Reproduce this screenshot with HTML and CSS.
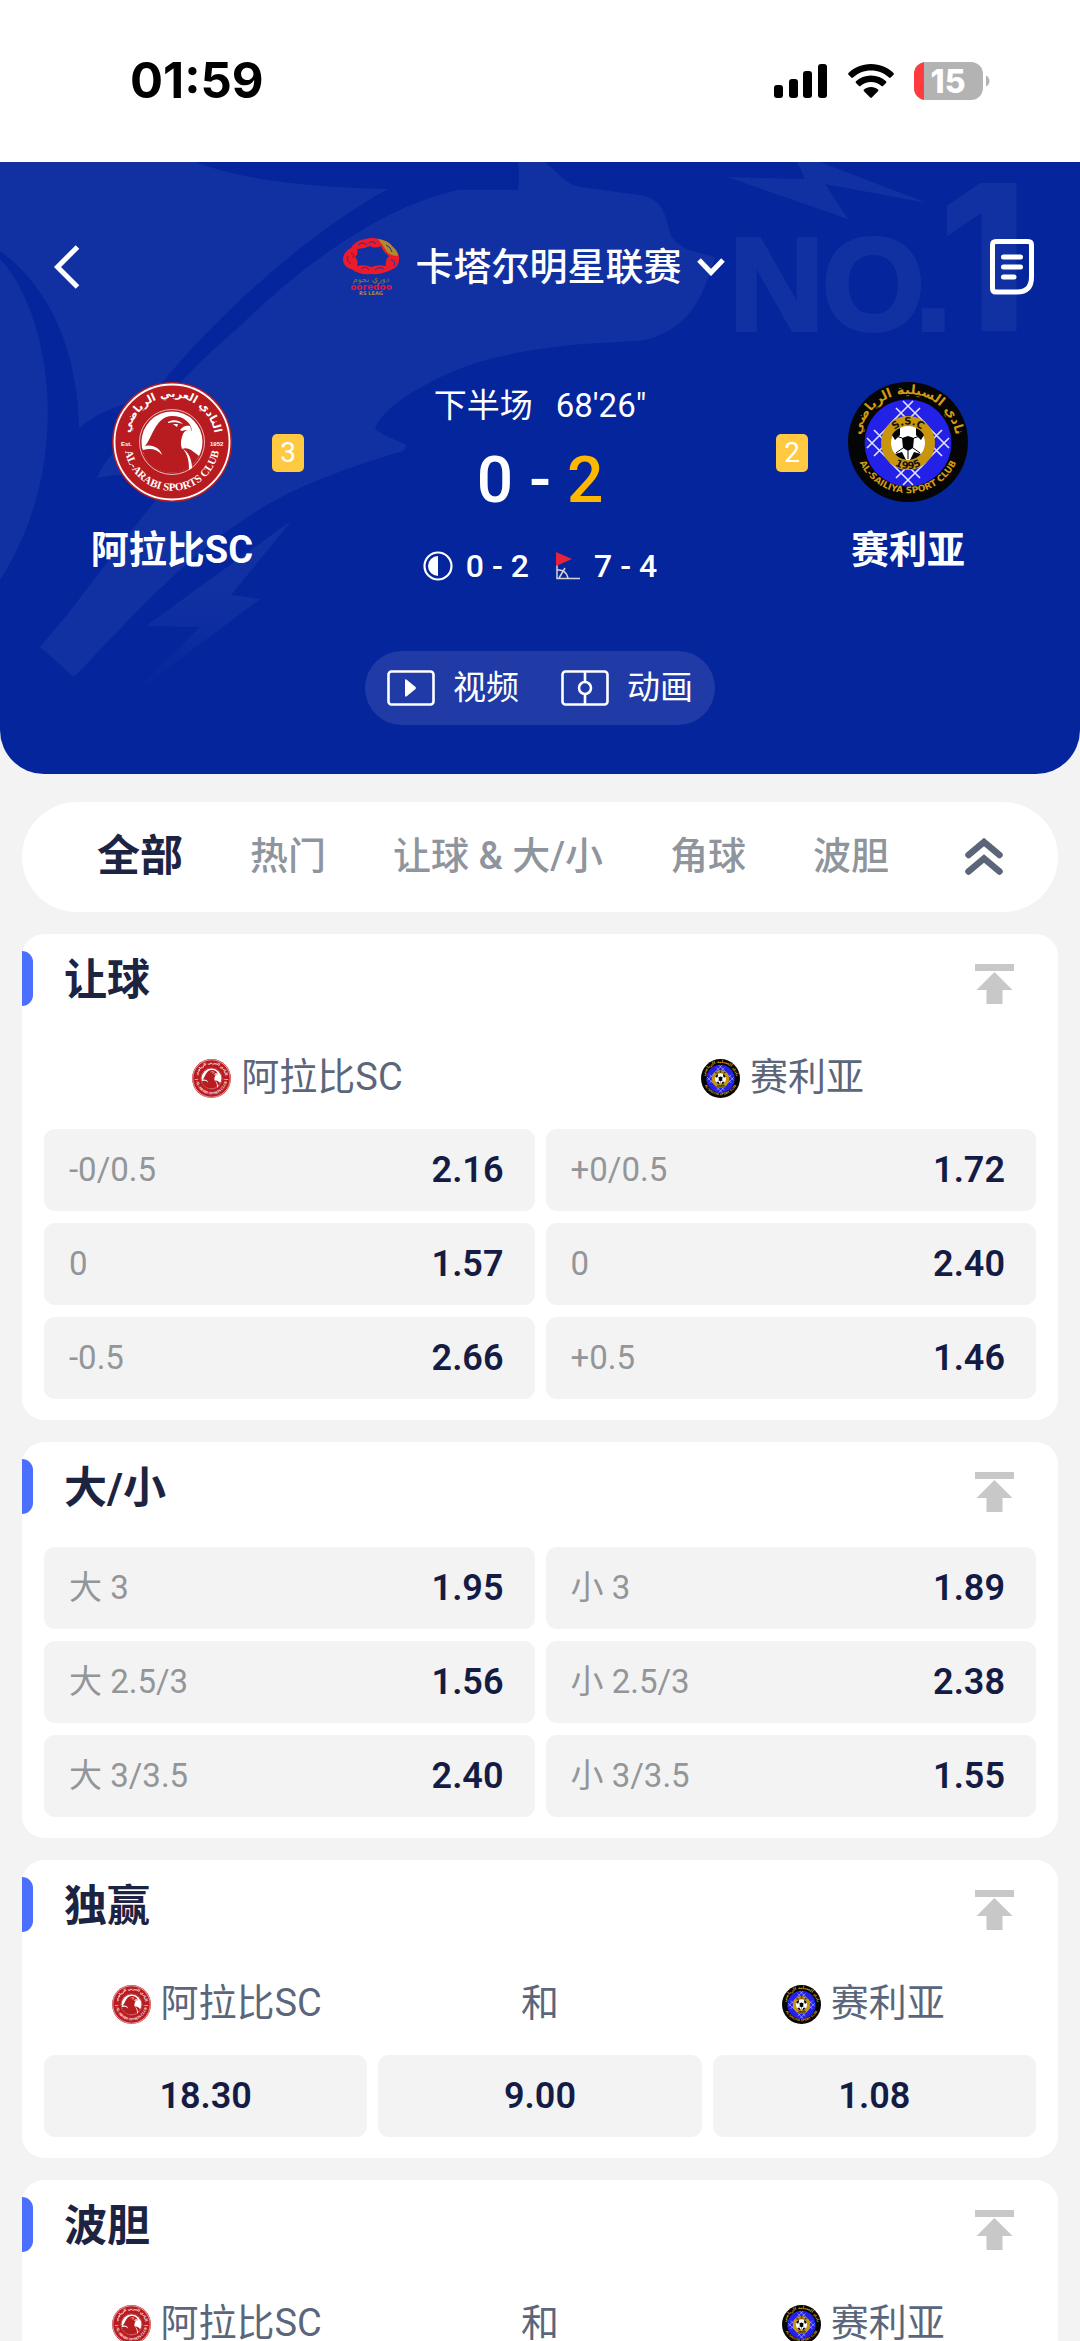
FILE: index.html
```html
<!DOCTYPE html>
<html lang="zh-CN">
<head>
<meta charset="utf-8">
<meta name="viewport" content="width=device-width, initial-scale=1">
<title>阿拉比SC - 赛利亚</title>
<link rel="stylesheet" href="styles.css">
</head>
<body>
<svg class="defs" aria-hidden="true">
  <symbol id="arabi" viewBox="0 0 120 120">
    <circle cx="60" cy="60" r="60" fill="#b91c20"/>
    <circle cx="60" cy="60" r="57.500" fill="none" stroke="#fff" stroke-width="1.800"/>
    <circle cx="60" cy="60" r="32.500" fill="none" stroke="#e9b9ba" stroke-width="1"/>
    <circle cx="60" cy="60" r="30.500" fill="#fff"/>
    <path d="M30 67C36 62 38 55 42 48C46 40 52 34 60 34C71 34 79 40 80 49C76 47 73 48 71 52C69 57 68 62 70 67C76 64 82 70 87 74A30.500 30.500 0 0 1 33 75L30 67Z" fill="#b91c20"/>
    <path d="M30 65C38 61 48 65 50 73C45 67 39 66 31 68ZM71 67C77 70 80 79 80 86L77 88C77 79 76 73 71 67ZM56 40C61 37 67 38 71 42C65 40 61 40 56 41ZM61 42L66 42L65 45ZM68 48C71 44 74 43 78 44L80 50C77 47 73 48 70 49Z" fill="#fff"/>
    <path id="arabi-low" d="M13.500 71A47.500 47.500 0 0 0 106.500 71" fill="none"/>
    <path id="arabi-top" d="M17 58A43 43 0 0 1 103 58" fill="none"/>
    <text class="crest-serif" fill="#fff"><textPath href="#arabi-low" startOffset="50%" text-anchor="middle">AL-ARABI SPORTS CLUB</textPath></text>
    <text class="crest-arabic" fill="#fff"><textPath href="#arabi-top" startOffset="50%" text-anchor="middle">النادي العربي الرياضي</textPath></text>
    <text class="crest-tiny" x="9" y="64" fill="#fff">Est.</text>
    <text class="crest-tiny" x="98" y="64" fill="#fff">1952</text>
  </symbol>
  <symbol id="sailiya" viewBox="0 0 120 120">
    <circle cx="60" cy="60" r="60" fill="#050505"/>
    <circle cx="60" cy="61" r="43.500" fill="#2320e8"/>
    <g stroke="#e4e4ff" stroke-width="1.600" fill="none">
      <path d="M55 19L78 42M65 19L42 42M48 26L62 40M72 26L58 40M55 103L78 80M65 103L42 80M48 96L62 82M72 96L58 82"/>
      <path d="M19 56L42 79M19 66L42 43M26 48L36 58M26 74L36 64M101 56L78 79M101 66L78 43M94 48L84 58M94 74L84 64"/>
    </g>
    <circle cx="60" cy="61" r="27" fill="#c8960c"/>
    <circle cx="60" cy="61" r="17" fill="#fff"/>
    <path d="M54 56L60 54L66 56L65 66L60 69L55 66ZM44 53A17 17 0 0 1 52 46L52 53L47 58ZM76 53A17 17 0 0 0 68 46L68 53L73 58ZM47 72L54 70L58 78A17 17 0 0 1 47 72ZM73 72L66 70L62 78A17 17 0 0 0 73 72Z" fill="#050505"/>
    <path d="M55 66L48 71M65 66L72 71M54 56L48 54M66 56L72 54M60 69V77" stroke="#050505" stroke-width="1"/>
    <path id="sail-in" d="M41.500 61A18.500 18.500 0 0 1 78.500 61" fill="none"/>
    <path id="sail-inlow" d="M34 61A26 26 0 0 0 86 61" fill="none"/>
    <path id="sail-low" d="M7.500 68A53.500 53.500 0 0 0 112.500 68" fill="none"/>
    <path id="sail-top" d="M12 60A48 48 0 0 1 108 60" fill="none"/>
    <text class="crest-sans" fill="#111"><textPath href="#sail-in" startOffset="50%" text-anchor="middle">S.S.C</textPath></text>
    <text class="crest-sans" fill="#111"><textPath href="#sail-inlow" startOffset="50%" text-anchor="middle">1995</textPath></text>
    <text class="crest-sans crest-sans-sm" fill="#d49b12"><textPath href="#sail-low" startOffset="50%" text-anchor="middle">AL-SAILIYA SPORT CLUB</textPath></text>
    <text class="crest-arabic crest-arabic-lg" fill="#d49b12"><textPath href="#sail-top" startOffset="50%" text-anchor="middle">نادي السيلية الرياضي</textPath></text>
  </symbol>
  <symbol id="totop" viewBox="0 0 39 40">
    <path d="M0 0H39V7H0ZM19.500 8L37.500 26H27.500V40H11.500V26H1.500Z" fill="#c8c8c8"/>
  </symbol>
</svg>

<header class="status">
  <time class="clock">01:59</time>
  <div class="status-icons">
    <svg width="54" height="36" viewBox="0 0 54 36" aria-hidden="true"><rect x="0" y="22" width="9" height="13" rx="3"/><rect x="15" y="16" width="9" height="19" rx="3"/><rect x="29" y="8" width="9" height="27" rx="3"/><rect x="44" y="1" width="9" height="34" rx="3"/></svg>
    <svg width="46" height="36" viewBox="0 0 46 36" aria-hidden="true"><path d="M23 1C32 1 40 4.500 45.500 10C46 10.500 46 11.200 45.500 11.700L42.700 14.500C42.200 15 41.500 15 41 14.500C36 10 30 7.500 23 7.500S10 10 5 14.500C4.500 15 3.800 15 3.300 14.500L.500 11.700C0 11.200 0 10.500 .500 10C6 4.500 14 1 23 1Z"/><path d="M23 12.500C29 12.500 34 14.600 38 18.300C38.500 18.800 38.500 19.500 38 20L35 23C34.500 23.400 34 23.400 33.500 23C30.500 20.500 27 19 23 19S15.500 20.500 12.500 23C12 23.400 11.500 23.400 11 23L8 20C7.500 19.500 7.500 18.800 8 18.300C12 14.600 17 12.500 23 12.500Z"/><path d="M23 24C25.800 24 28.200 25 30 26.600C30.500 27 30.500 27.700 30 28.200L23.800 34.500C23.300 35 22.700 35 22.200 34.500L16 28.200C15.500 27.700 15.500 27 16 26.600C17.800 25 20.200 24 23 24Z"/></svg>
    <svg width="76" height="38" viewBox="0 0 76 38" aria-hidden="true"><clipPath id="batt"><rect width="69" height="38" rx="12"/></clipPath><g clip-path="url(#batt)"><rect width="69" height="38" fill="#b3b3b3"/><rect width="10" height="38" fill="#ff3b3f"/></g><path d="M72 13.500Q75.500 15.500 75.500 19T72 24.500Z" fill="#b3b3b3"/><text class="batt-text" x="34" y="31" text-anchor="middle" fill="#fff">15</text></svg>
  </div>
</header>

<section class="hero">
  <svg class="hero-art" viewBox="0 0 1080 612" preserveAspectRatio="xMidYMin slice" aria-hidden="true">
    <defs><linearGradient id="fade" x1="0" y1="0" x2="0" y2="1"><stop offset=".4" stop-color="#1131a2"/><stop offset="1" stop-color="#04259c"/></linearGradient></defs>
    <g fill="#1131a2">
      <path d="M0 0H196C240 18 310 25 388 27C300 75 200 170 152 234C120 242 95 252 79 266C78 190 50 125 0 89Z"/>
      <path d="M0 97C50 150 76 300 0 418Z"/>
      <path d="M518 0H545C560 12 565 22 580 25L640 33C668 38 665 60 672 75C682 90 700 90 715 95C705 130 692 160 660 173C650 178 640 179 620 180C560 182 500 190 454 209C410 228 380 250 375 267C385 275 400 279 406 283Q408 288 396 291C360 302 330 312 289 331C210 370 150 435 74 515L40 485C80 440 120 380 162 331Q164 318 138 312Q118 312 97 316C110 285 140 270 152 245L175 226C195 205 215 185 238 166C300 105 380 45 458 28H518Q520 14 518 0Z"/>
      <path d="M727 15L805 17L797 0H820L927 41L825 22L848 57Z"/>
      <text class="art-no" y="168"><tspan x="729">N</tspan><tspan x="822">O</tspan><tspan x="915">.</tspan></text>
      <text class="art-one" x="938" y="169">1</text>
    </g>
    <path d="M291 359L231 433L260 437L131 534L200 465L146 464Z" fill="url(#fade)"/>
  </svg>

  <nav class="topbar">
    <button class="icon-btn back" aria-label="返回"><svg width="26" height="44" viewBox="0 0 26 44"><path d="M23.500 2L3.500 22L23.500 42" fill="none" stroke="#fff" stroke-width="5"/></svg></button>
    <button class="league">
      <svg width="57" height="58" viewBox="0 0 57 58" aria-hidden="true">
        <path fill-rule="evenodd" d="M22 1Q30 -1 36 1Q45 2 50 10Q57 15 56 22Q56 29 48 32Q38 37 28 36Q16 37 10 32Q0 29 0 22Q0 14 8 10Q12 3 22 1ZM27 8Q21 11 14 11Q16 16 12 19Q16 23 14 28Q22 26 28 29Q36 26 43 28Q42 22 46 18Q40 14 38 8Q32 11 27 8Z" fill="#ea1c2c"/>
        <path d="M35 1Q45 2 50 9Q55 13 55 18Q48 18 44 14Q40 7 35 1Z" fill="#b08a2c"/>
        <path d="M15 7q5-4 9 0M26 5q4-3 7 1M5 18q-2 5 3 8M8 15q4 0 2 5M18 31q5-4 8 1M32 32q4-4 9-1M48 22q5 0 3 6M43 7q5 2 6 7" fill="none" stroke="#2a2f94" stroke-width="1"/>
        <text class="league-ar" x="28" y="44" text-anchor="middle" fill="#8a743c">دوري نجوم</text>
        <text class="league-oo" x="28" y="52" text-anchor="middle" fill="#d91c3a">ooredoo</text>
        <text class="league-st" x="28" y="57" text-anchor="middle" fill="#b08a2c">RS LEAG</text>
      </svg>
      <span>卡塔尔明星联赛</span>
      <svg width="28" height="18" viewBox="0 0 28 18" aria-hidden="true"><path d="M2 2L14 14.500L26 2" fill="none" stroke="#fff" stroke-width="5"/></svg>
    </button>
    <button class="icon-btn notes" aria-label="注单"><svg width="44" height="56" viewBox="0 0 44 56"><path d="M6 2.500H38Q41.500 2.500 41.500 6V38Q41.500 53 27 53H6Q2.500 53 2.500 49.500V6Q2.500 2.500 6 2.500Z" fill="none" stroke="#fff" stroke-width="5"/><path d="M13.500 18H30.500M13.500 28H30.500M13.500 38H24" stroke="#fff" stroke-width="5" stroke-linecap="round"/></svg></button>
  </nav>

  <div class="match">
    <div class="team"><svg class="crest"><use href="#arabi"/></svg><h2>阿拉比SC</h2></div>
    <span class="card-count">3</span>
    <div class="board">
      <p class="period"><span>下半场</span><span>68'26"</span></p>
      <p class="score"><span>0</span><span>-</span><span class="lead">2</span></p>
      <div class="stats">
        <svg width="30" height="30" viewBox="0 0 30 30" aria-hidden="true"><circle cx="15" cy="15" r="13.500" fill="none" stroke="#fff" stroke-width="2.200"/><path d="M15 5A10 10 0 0 0 15 25Z" fill="#fff"/></svg>
        <span>0 - 2</span>
        <svg class="flag" width="25" height="28" viewBox="0 0 25 28" aria-hidden="true"><path d="M1 13V26.500H24M1 18Q10 17 12 26M3 26L9 16" fill="none" stroke="#d6d3d6" stroke-width="1.500"/><path d="M0 0L16 7L0 14Z" fill="#e6233c"/></svg>
        <span>7 - 4</span>
      </div>
    </div>
    <span class="card-count">2</span>
    <div class="team"><svg class="crest"><use href="#sailiya"/></svg><h2>赛利亚</h2></div>
  </div>

  <div class="media">
    <button><svg width="48" height="36" viewBox="0 0 48 36" aria-hidden="true"><rect x="1.500" y="1.500" width="45" height="33" rx="3" fill="none" stroke="#fff" stroke-width="2.600"/><path d="M18 10.500Q18 8.500 20 10L28.500 17Q29.500 18 28.500 19L20 26Q18 27.500 18 25.500Z" fill="#fff"/></svg><span>视频</span></button>
    <button><svg width="48" height="36" viewBox="0 0 48 36" aria-hidden="true"><g fill="none" stroke="#fff" stroke-width="2.600"><rect x="1.500" y="1.500" width="45" height="33" rx="3"/><circle cx="24" cy="18" r="6"/><path d="M24 2V12M24 24V34"/></g></svg><span>动画</span></button>
  </div>
</section>

<main>
  <nav class="tabs">
    <button class="tab active">全部</button>
    <button class="tab">热门</button>
    <button class="tab">让球 &amp; 大/小</button>
    <button class="tab">角球</button>
    <button class="tab">波胆</button>
    <button class="icon-btn collapse" aria-label="收起"><svg width="38" height="38" viewBox="0 0 38 38"><path d="M3.500 17L19 4L34.500 17M3.500 33.500L19 20.500L34.500 33.500" fill="none" stroke="#5b6479" stroke-width="6.500" stroke-linecap="round"/></svg></button>
  </nav>

  <section class="market">
    <header><h3>让球</h3><button class="icon-btn" aria-label="置顶"><svg width="39" height="40"><use href="#totop"/></svg></button></header>
    <div class="sides two">
      <span class="side"><svg class="mini"><use href="#arabi"/></svg>阿拉比SC</span>
      <span class="side"><svg class="mini"><use href="#sailiya"/></svg>赛利亚</span>
    </div>
    <div class="odds two">
      <button class="odd"><span>-0/0.5</span><b>2.16</b></button>
      <button class="odd"><span>+0/0.5</span><b>1.72</b></button>
      <button class="odd"><span>0</span><b>1.57</b></button>
      <button class="odd"><span>0</span><b>2.40</b></button>
      <button class="odd"><span>-0.5</span><b>2.66</b></button>
      <button class="odd"><span>+0.5</span><b>1.46</b></button>
    </div>
  </section>

  <section class="market">
    <header><h3>大/小</h3><button class="icon-btn" aria-label="置顶"><svg width="39" height="40"><use href="#totop"/></svg></button></header>
    <div class="odds two">
      <button class="odd"><span>大 3</span><b>1.95</b></button>
      <button class="odd"><span>小 3</span><b>1.89</b></button>
      <button class="odd"><span>大 2.5/3</span><b>1.56</b></button>
      <button class="odd"><span>小 2.5/3</span><b>2.38</b></button>
      <button class="odd"><span>大 3/3.5</span><b>2.40</b></button>
      <button class="odd"><span>小 3/3.5</span><b>1.55</b></button>
    </div>
  </section>

  <section class="market">
    <header><h3>独赢</h3><button class="icon-btn" aria-label="置顶"><svg width="39" height="40"><use href="#totop"/></svg></button></header>
    <div class="sides three">
      <span class="side"><svg class="mini"><use href="#arabi"/></svg>阿拉比SC</span>
      <span class="side">和</span>
      <span class="side"><svg class="mini"><use href="#sailiya"/></svg>赛利亚</span>
    </div>
    <div class="odds three">
      <button class="odd"><b>18.30</b></button>
      <button class="odd"><b>9.00</b></button>
      <button class="odd"><b>1.08</b></button>
    </div>
  </section>

  <section class="market">
    <header><h3>波胆</h3><button class="icon-btn" aria-label="置顶"><svg width="39" height="40"><use href="#totop"/></svg></button></header>
    <div class="sides three">
      <span class="side"><svg class="mini"><use href="#arabi"/></svg>阿拉比SC</span>
      <span class="side">和</span>
      <span class="side"><svg class="mini"><use href="#sailiya"/></svg>赛利亚</span>
    </div>
  </section>
</main>
</body>
</html>
```
FILE: styles.css
```css
* { box-sizing: border-box; margin: 0; }

html { height: 100%; overflow: hidden; }

body {
  height: 100%;
  overflow: hidden;
  background: #f3f3f3;
  color: #1d2442;
  font-family: Roboto, "Noto Sans CJK SC", sans-serif;
  font-size: 38px;
  line-height: 1.25;
}

button {
  padding: 0;
  border: 0;
  background: none;
  color: inherit;
  font: inherit;
}

svg { display: block; flex: none; }
.defs { position: absolute; width: 0; height: 0; }
.icon-btn { display: flex; }

/* crest lettering */
.crest-serif { font: 700 11px "Liberation Serif", serif; }
.crest-sans { font: 700 10px "DejaVu Sans", sans-serif; }
.crest-sans-sm { font-size: 9px; }
.crest-arabic { font: 700 11px "DejaVu Sans", sans-serif; }
.crest-arabic-lg { font-size: 13px; }
.crest-tiny { font: 700 6px "Liberation Sans", sans-serif; }

/* status bar */
.status {
  display: flex;
  align-items: center;
  justify-content: space-between;
  height: 162px;
  padding: 0 90px 0 130px;
  background: #fff;
  color: #000;
}
.clock { font: 700 49px/60px Inter, sans-serif; }
.status-icons { display: flex; align-items: center; gap: 20px; }
.batt-text { font: 800 32px Inter, sans-serif; }

/* match header */
.hero {
  position: relative;
  padding: 76px 0 49px;
  border-radius: 0 0 44px 44px;
  background: #04259c;
  color: #fff;
  overflow: hidden;
}
.hero-art { position: absolute; inset: 0; width: 100%; height: 100%; }
.art-no {
  font: 700 132px "Liberation Sans", sans-serif;
  stroke: #1131a2;
  stroke-width: 4px;
}
.art-one { font: 800 204px Inter, sans-serif; }
.topbar, .match, .media { position: relative; }

.topbar {
  display: grid;
  grid-template-columns: 1fr auto 1fr;
  align-items: center;
  height: 58px;
  padding: 0 46px 0 34px;
}
.back { padding-left: 20px; }
.notes { justify-self: end; }
.league {
  display: flex;
  align-items: center;
  gap: 15px;
  font-weight: 500;
  line-height: 54px;
}
.league-ar { font: 400 8px "DejaVu Sans", sans-serif; }
.league-oo { font: 700 9px "DejaVu Sans", sans-serif; }
.league-st { font: 700 5px "DejaVu Sans", sans-serif; }

.match {
  display: grid;
  grid-template-columns: 200px 32px 1fr 32px 200px;
  margin-top: 86px;
  padding: 0 72px;
}
.team { display: flex; flex-direction: column; align-items: center; gap: 22px; }
.crest { width: 120px; height: 120px; }
.team h2 { font-size: 38px; font-weight: 700; line-height: 52px; white-space: nowrap; }
.card-count {
  height: 38px;
  margin-top: 52px;
  border-radius: 5px;
  background: #ffca42;
  font-size: 28px;
  line-height: 38px;
  text-align: center;
}
.board { display: flex; flex-direction: column; align-items: center; }
.period { display: flex; gap: 23px; font-size: 33px; line-height: 48px; }
.score {
  display: flex;
  gap: 16px;
  margin-top: 15px;
  font-size: 64px;
  font-weight: 500;
  line-height: 72px;
}
.lead { color: #ffb800; }
.stats {
  display: flex;
  align-items: center;
  gap: 13px;
  margin-top: 29px;
  font-size: 32px;
  font-weight: 500;
  line-height: 40px;
}
.flag { margin-left: 14px; }

.media {
  display: flex;
  gap: 42px;
  width: max-content;
  height: 74px;
  margin: 65px auto 0;
  padding: 0 22px;
  border-radius: 37px;
  background: #203ba6;
  font-size: 33px;
}
.media button { display: flex; align-items: center; gap: 18px; }

/* markets */
main { display: grid; gap: 22px; padding: 28px 22px; }

.tabs {
  display: flex;
  align-items: center;
  gap: 67px;
  height: 110px;
  padding: 0 55px 0 75px;
  border-radius: 55px;
  background: #fff;
  color: #8f959c;
  white-space: nowrap;
}
.tab { font-weight: 500; }
.tab.active { color: #1d2442; font-size: 43px; font-weight: 700; }
.collapse { margin-left: auto; }

.market {
  padding-bottom: 21px;
  border-radius: 22px;
  background: #fff;
}
.market header {
  display: flex;
  align-items: flex-start;
  justify-content: space-between;
  height: 105px;
  padding: 17px 44px 0 0;
}
.market h3 {
  display: flex;
  gap: 31px;
  font-size: 43px;
  font-weight: 700;
  line-height: 58px;
}
.market h3::before {
  content: "";
  width: 11px;
  height: 55px;
  border-radius: 0 11px 11px 0;
  background: #4b70ff;
}
.market header .icon-btn { margin-top: 13px; }

.sides { display: grid; height: 90px; padding: 0 33px; }
.side {
  display: flex;
  align-items: center;
  justify-content: center;
  gap: 10px;
  height: 78px;
  color: #5b667b;
}
.mini { width: 39px; height: 39px; }
.odds { display: grid; gap: 12px 11px; padding: 0 22px; }
.two { grid-template-columns: repeat(2, 1fr); }
.three { grid-template-columns: repeat(3, 1fr); }
.odd {
  display: flex;
  align-items: center;
  justify-content: space-between;
  height: 82px;
  padding: 0 31px 0 25px;
  border-radius: 11px;
  background: #f3f3f3;
  color: #939699;
  font-size: 33px;
}
.odd b {
  color: #141c45;
  font-size: 36px;
  font-weight: 600;
}
.three .odd { justify-content: center; padding: 0; }
```
